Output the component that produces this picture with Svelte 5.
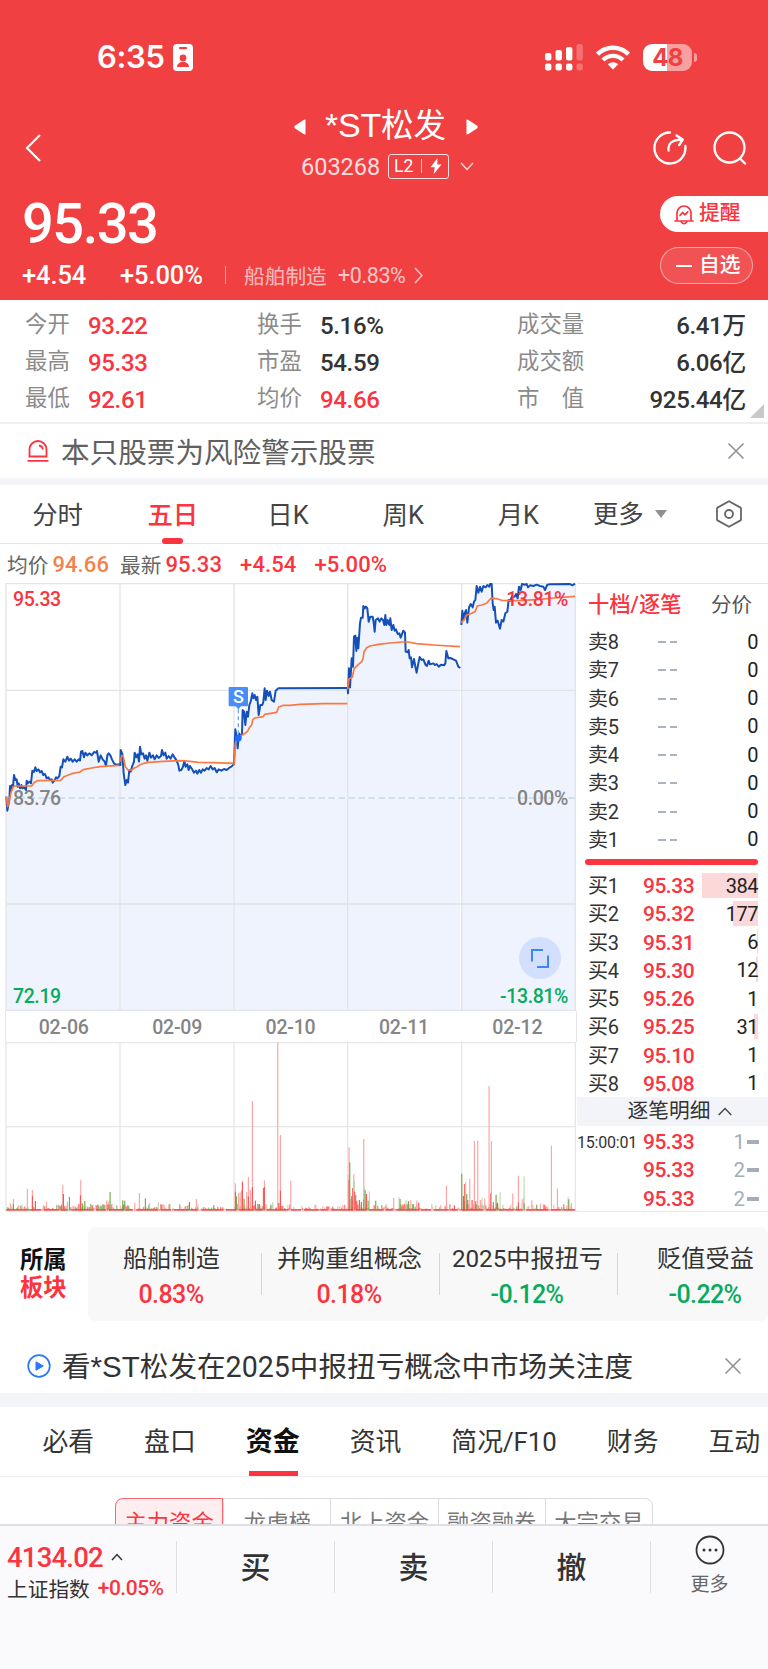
<script>
  const stats = [
    ['今开', '93.22', 'up', '换手', '5.16%', '', '成交量', '6.41万'],
    ['最高', '95.33', 'up', '市盈', '54.59', '', '成交额', '6.06亿'],
    ['最低', '92.61', 'up', '均价', '94.66', 'up', '市　值', '925.44亿']
  ];
  const periods = ['分时', '五日', '日K', '周K', '月K'];
  const dates = ['02-06', '02-09', '02-10', '02-11', '02-12'];
  const asks = [8, 7, 6, 5, 4, 3, 2, 1];
  const bids = [
    ['95.33', 384, 56], ['95.32', 177, 25], ['95.31', 6, 1], ['95.30', 12, 2],
    ['95.26', 1, 0], ['95.25', 31, 4.5], ['95.10', 1, 0], ['95.08', 1, 0]
  ];
  const ticks = [['15:00:01', 1], ['', 2], ['', 2]];
  const sectors = [
    ['船舶制造', '0.83%', 'up'], ['并购重组概念', '0.18%', 'up'],
    ['2025中报扭亏', '-0.12%', 'down'], ['贬值受益', '-0.22%', 'down']
  ];
  const sections = ['必看', '盘口', '资金', '资讯', '简况/F10', '财务', '互动'];
  const funds = ['主力资金', '龙虎榜', '北上资金', '融资融券', '大宗交易'];

  // One entry per trading day: horizontal origin, price trace, average trace.
  const days = [
    {
      dx: 0,
      price: '19,680 22,722 25,705 28,690 30,648 33,662 36,645 39,650 42,615 46,630 50,628 53,650 56,640 60,655 64,645 67,655 72,652 78,660 80,632 83,640 88,635 93,640 97,602 102,606 106,592 110,603 115,598 120,607 125,603 130,615 135,612 140,625 145,622 150,630 155,628 158,638 163,632 168,622 172,625 178,618 182,590 186,592 190,568 196,575 202,560 207,572 212,566 218,575 224,568 230,575 236,568 240,572 243,545 247,543 252,562 256,548 262,556 268,550 275,556 282,546 289,548 291,543 296,575 302,556 308,568 314,575 318,588 322,556 326,550 331,556 336,568 342,580 348,584 360,583',
      avg: '19,680 23,710 28,690 34,665 40,650 46,648 95,648 102,638 112,632 182,631 192,620 215,611 240,606 250,599 275,594 300,590 345,587 360,586'
    },
    {
      dx: 0,
      price: '361,588 362,540 367,552 371,610 376,645 380,630 384,638 388,600 392,605 396,590 402,575 404,548 409,562 413,553 417,575 420,530 424,553 429,550 434,566 438,556 442,572 448,548 453,563 459,556 464,568 470,556 476,564 483,558 486,540 491,556 496,548 500,566 506,558 512,566 518,553 524,563 530,572 535,585 538,602 544,600 549,590 553,573 557,590 562,583 566,600 570,588 576,597 582,608 588,602 592,611 598,600 603,608 608,598 614,602 620,594 626,598 632,588 638,598 644,594 650,607 656,598 664,602 672,597 680,600 688,593 694,590 701,583',
      avg: '361,575 365,556 370,560 376,590 384,600 395,600 403,594 412,590 420,584 432,580 445,577 490,574 540,572 570,574 595,577 640,578 703,580'
    },
    {
      dx: 660,
      price: '42,585 46,478 50,500 53,535 57,490 61,500 66,490 68,420 72,425 76,465 80,425 84,440 88,405 92,395 97,370 100,385 104,375 108,390 112,380 116,435 121,405 127,405 130,395 134,355 137,390 141,362 146,378 150,365 155,390 162,395 167,362 175,355 382,354',
      avg: '42,585 46,520 52,505 62,498 72,492 82,485 90,470 95,465 98,450 104,444 130,440 134,433 170,427 176,411 190,406 210,406 240,403 310,401 382,401'
    },
    {
      dx: 660,
      price: '383,352 384,370 387,295 390,352 395,265 399,290 402,200 406,197 409,243 412,203 415,235 420,160 423,143 428,143 430,108 434,115 438,110 442,115 446,155 451,140 458,140 461,158 464,185 467,150 474,145 479,155 484,145 489,150 493,165 496,135 499,165 503,150 508,165 511,145 515,180 520,165 524,182 528,178 533,192 538,190 542,203 550,182 555,188 557,245 563,247 566,240 569,265 573,262 576,292 582,267 586,290 590,308 594,285 599,261 605,270 610,268 617,285 621,288 626,272 630,283 640,280 645,285 650,282 656,290 664,284 672,286 676,280 679,243 685,265 692,264 700,268 708,272 715,290 721,294',
      avg: '383,358 387,327 397,322 402,297 412,286 425,275 429,267 432,245 440,233 450,228 475,223 510,219 545,216 565,216 590,221 640,225 720,230'
    },
    {
      dx: 660,
      price: '724,165 727,122 730,150 734,130 738,120 742,158 747,112 752,102 758,112 762,95 766,90 770,48 775,68 780,50 785,65 790,48 797,52 802,45 808,50 810,42 815,42 818,100 821,120 824,110 828,158 833,152 840,176 845,150 850,155 856,130 862,125 866,90 871,92 876,80 884,80 888,72 893,85 897,50 902,60 906,42 915,44 920,42 924,52 930,46 940,48 950,44 960,48 970,50 975,60 982,44 990,43 1050,42 1057,46 1065,41',
      avg: '724,157 732,150 740,135 755,130 765,125 772,108 785,105 800,100 808,90 813,85 830,86 845,91 880,92 910,91 960,88 1000,84 1065,79'
    }
  ];
  const area = (pts) => {
    const p = pts.split(' ');
    return `${p[0].split(',')[0]},1323 ${pts} ${p[p.length - 1].split(',')[0]},1323`;
  };

  // Volume spikes: x, top, colour key (p pale red, r red, g green, l pale green).
  const spikes = [
    [31, 520, 'p'], [40, 507, 'p'], [40, 522, 'g'], [82, 477, 'p'], [97, 480, 'p'], [97, 498, 'r'], [106, 513, 'r'], [139, 515, 'p'], [130, 526, 'p'],
    [188, 465, 'p'], [190, 492, 'r'], [184, 524, 'g'], [202, 515, 'p'], [208, 501, 'g'], [242, 450, 'p'], [241, 496, 'r'], [254, 513, 'g'], [247, 520, 'g'],
    [276, 526, 'r'], [320, 511, 'p'], [326, 514, 'p'], [330, 486, 'g'], [324, 524, 'r'],
    [368, 511, 'g'], [374, 512, 'g'], [370, 524, 'g'], [404, 518, 'p'], [418, 489, 'p'], [436, 505, 'g'], [448, 519, 'p'], [475, 516, 'l'], [490, 527, 'l'], [507, 527, 'p'], [568, 516, 'r'], [589, 507, 'p'], [594, 522, 'l'],
    [706, 460, 'p'], [706, 485, 'r'], [709, 499, 'g'], [715, 490, 'p'], [720, 487, 'p'], [724, 482, 'p'], [727, 455, 'r'], [732, 506, 'g'], [740, 486, 'p'], [745, 441, 'p'], [745, 500, 'r'], [751, 480, 'p'], [757, 213, 'p'], [757, 472, 'r'], [766, 512, 'r'], [778, 522, 'g'], [790, 474, 'r'], [793, 451, 'p'], [793, 471, 'r'],
    [818, 516, 'l'], [812, 524, 'g'], [833, 38, 'p'], [836, 519, 'r'], [841, 315, 'p'], [841, 482, 'r'], [872, 452, 'p'],
    [1044, 435, 'l'], [1047, 352, 'p'], [1047, 450, 'r'], [1049, 397, 'g'], [1055, 498, 'r'], [1058, 474, 'r'], [1061, 433, 'p'], [1063, 453, 'l'], [1064, 485, 'r'], [1067, 495, 'g'], [1070, 512, 'r'], [1078, 510, 'r'], [1084, 516, 'r'], [1091, 327, 'p'], [1091, 508, 'r'], [1093, 472, 'l'], [1095, 480, 'g'], [1099, 492, 'r'], [1108, 484, 'l'], [1104, 512, 'g'], [1127, 512, 'g'],
    [1158, 523, 'p'], [1181, 504, 'p'], [1197, 501, 'l'], [1200, 507, 'g'], [1218, 510, 'l'], [1225, 513, 'g'], [1232, 511, 'p'], [1239, 522, 'g'], [1250, 512, 'p'], [1256, 518, 'r'], [1295, 521, 'l'], [1339, 467, 'p'], [1363, 526, 'r'],
    [1385, 431, 'g'], [1388, 462, 'l'], [1390, 498, 'r'], [1394, 462, 'r'], [1397, 455, 'l'], [1400, 492, 'g'], [1403, 510, 'r'], [1409, 446, 'p'], [1416, 510, 'r'], [1423, 333, 'p'], [1427, 514, 'r'], [1433, 332, 'p'], [1441, 510, 'p'], [1446, 502, 'l'], [1454, 505, 'p'],
    [1467, 168, 'p'], [1472, 490, 'r'], [1474, 333, 'p'], [1480, 516, 'g'], [1488, 494, 'g'], [1492, 518, 'r'], [1500, 486, 'l'], [1538, 490, 'p'], [1555, 438, 'p'], [1555, 518, 'r'], [1566, 508, 'p'], [1571, 502, 'p'], [1572, 439, 'l'], [1572, 520, 'g'], [1595, 511, 'p'], [1610, 524, 'g'], [1621, 521, 'p'], [1654, 347, 'p'], [1672, 476, 'p'], [1704, 500, 'l'], [1706, 508, 'g'], [1714, 519, 'p']
  ];
  const tone = { p: '#ffa3a5', r: '#fb5555', g: '#78a951', l: '#c3dcb4' };

  let seed = 17;
  const rnd = () => (seed = (seed * 16807) % 2147483647) / 2147483647;
  const busy = [[175, 345], [360, 385], [702, 800], [1044, 1100], [1190, 1260], [1385, 1510]];
  const floor = [];
  for (let x = 19; x < 1724; x += 3) {
    const b = busy.some(([s, e]) => x >= s && x <= e);
    const r = rnd();
    const early = (x >= 1044 && x < 1068) || (x >= 1385 && x < 1402);
    const h = 3 + (b ? rnd() * 17 : Math.pow(rnd(), 4) * 16) + (early ? 30 * rnd() : 0);
    const calm = (x > 860 && x < 1040) || x > 1630;
    floor.push([x, h, r < 0.3 && !calm ? 'g' : r < 0.6 ? 'p' : 'r']);
  }
</script>

<div class="screen">
  <header>
    <div class="status">
      <span class="time">6:35</span>
      <svg class="badge" width="20" height="27" viewBox="0 0 20 27"><rect width="20" height="27" rx="4" fill="#fff"/><rect x="6" y="3" width="8" height="2.2" rx="1" fill="#f04042"/><circle cx="10" cy="14" r="3.4" fill="#f04042"/><path d="M4 23c0-3 2.5-5 6-5s6 2 6 5z" fill="#f04042"/></svg>
      <svg class="signal" width="39" height="27" viewBox="0 0 39 27" fill="#fff"><rect x="0" y="9" width="6.4" height="7.5" rx="2"/><rect x="10.5" y="6" width="6.4" height="10.5" rx="2"/><rect x="21" y="3" width="6.4" height="13.5" rx="2"/><rect x="31.5" y="0" width="6.4" height="16.5" rx="2" opacity=".25"/><rect x="0" y="19.5" width="6.4" height="7" rx="2"/><rect x="10.5" y="19.5" width="6.4" height="7" rx="2"/><rect x="21" y="19.5" width="6.4" height="7" rx="2"/><rect x="31.5" y="19.5" width="6.4" height="7" rx="2" opacity=".25"/></svg>
      <svg class="wifi" width="34" height="25" viewBox="0 0 34 25"><g fill="none" stroke="#fff" stroke-width="4.4"><path d="M1.5 9.2a22 22 0 0 1 31 0"/><path d="M7 15a14.2 14.2 0 0 1 20 0"/></g><path d="M17 24.6l-5.2-5.3a7.5 7.5 0 0 1 10.4 0z" fill="#fff"/></svg>
      <div class="battery"><span>48</span></div><i class="nub"></i>
    </div>
    <div class="nav">
      <svg class="back" width="17" height="30" viewBox="0 0 17 30"><path d="M15 2L2 15l13 13" fill="none" stroke="#fff" stroke-width="2.2"/></svg>
      <div class="titles">
        <div class="title">
          <svg width="12" height="16" viewBox="0 0 12 16"><path d="M11.5 .5v15L9.5 15 .8 9.2q-1-1.200 0-2.400L9.500 1z" fill="#fff"/></svg>
          <span><b>*ST</b>松发</span>
          <svg width="12" height="16" viewBox="0 0 12 16"><path d="M.5 .5v15L2.500 15 11.200 9.200q1-1.200 0-2.400L2.500 1z" fill="#fff"/></svg>
        </div>
        <div class="code">
          <span>603268</span>
          <div class="level"><em>L2</em><i></i><svg width="12" height="16" viewBox="0 0 12 16"><path d="M7.500 0L.5 9.200h4.200L3.800 16 11.500 6.500H7.300z" fill="#fff"/></svg></div>
          <svg width="14" height="9" viewBox="0 0 14 9"><path d="M1 1l6 6.500L13 1" fill="none" stroke="#fff" stroke-opacity=".8" stroke-width="1.500"/></svg>
        </div>
      </div>
      <svg class="share" width="34" height="34" viewBox="0 0 34 34" fill="none" stroke="#fff" stroke-width="2.300" stroke-linecap="round" stroke-linejoin="round"><path d="M17 1.500A15.500 15.500 0 1 0 32.300 15"/><path d="M15.500 19.500C15 12.500 18.500 8.800 29.500 8.500M23.500 4.500l6.300 4-3.600 5.500"/></svg>
      <svg class="search" width="34" height="34" viewBox="0 0 34 34" fill="none" stroke="#fff" stroke-width="2.300" stroke-linecap="round"><circle cx="16.500" cy="16.500" r="15"/><path d="M27 27.500l5 5"/></svg>
    </div>
    <div class="quote">
      <div class="figures">
        <div class="last">95.33</div>
        <div class="change"><b class="c1">+4.54</b><b class="c2">+5.00%</b><i></i><span class="industry">船舶制造</span><span class="ipct">+0.83%</span><svg width="9" height="17" viewBox="0 0 9 17"><path d="M1 1l7 7.500L1 16" fill="none" stroke="#fff" stroke-opacity=".65" stroke-width="1.600"/></svg></div>
      </div>
      <div class="pills">
        <div class="pill alert"><svg width="20" height="21" viewBox="0 0 20 21" fill="none" stroke="#fb3440" stroke-width="1.700" stroke-linecap="round" stroke-linejoin="round"><path d="M1 17h18M3 16.500V9a7 7 0 0 1 14 0v7.500M7 17.500q3 4.500 6 0M6 11.500l2.500-3 2.500 2.300 2.800-3"/></svg><span>提醒</span></div>
        <div class="pill fav"><i></i><span>自选</span></div>
      </div>
    </div>
  </header>

  <section class="stats">
    {#each stats as s}
      <div class="srow">
        <span class="k k1">{s[0]}</span><span class="v v1 {s[2]}">{s[1]}</span>
        <span class="k k2">{s[3]}</span><span class="v v2 {s[5]}">{s[4]}</span>
        <span class="k k3">{s[6]}</span><span class="v v3">{s[7]}</span>
      </div>
    {/each}
    <i class="corner"></i>
  </section>

  <div class="notice">
    <svg width="22" height="22" viewBox="0 0 22 22" fill="none" stroke="#fb3440" stroke-width="1.800"><path d="M2.500 16.500V9.500a8.500 8.500 0 0 1 17 0v7zM0.500 20.800h21"/><path d="M12 5.500q3.500.5 4 4"/></svg>
    <span>本只股票为风险警示股票</span>
    <svg class="x" width="16" height="16" viewBox="0 0 16 16"><path d="M.5.5l15 15M15.500.5l-15 15" stroke="#8e8e8e" stroke-width="1.500"/></svg>
  </div>
  <div class="band thin"></div>

  <nav class="periods">
    {#each periods as p, i}<span class:on={i === 1}>{p}</span>{/each}
    <div class="more">更多<i></i></div>
    <svg width="28" height="28" viewBox="0 0 28 28" fill="none" stroke="#666" stroke-width="1.800"><path d="M14 1.200l11.500 6.400q.5.300.5.800v11.200q0 .5-.5.800L14 26.800 2.500 20.400q-.5-.3-.5-.8V8.400q0-.5.5-.8z"/><circle cx="14" cy="14" r="4"/></svg>
  </nav>

  <div class="info"><span>均价</span><b class="or">94.66</b><span class="i2">最新</span><b>95.33</b><b class="i3">+4.54</b><b class="i4">+5.00%</b></div>

  <main>
    <div class="charts">
      <div class="price">
        <svg width="572" height="428" viewBox="15 39 1716 1284">
          <g fill="#eff3fe">{#each days as d}<polygon transform="translate({d.dx},0)" points={area(d.price)}/>{/each}</g>
          <g stroke="#e3e4e6" stroke-width="4" fill="none"><path d="M18 41V1323M360 41V1323M702 41V1323M1043 41V1323M1385 41V1323M1726 41V1323M16 41H1728M16 361H1728M16 1002H1728M16 1321H1728"/></g>
          <path d="M55 684H1726" stroke="#cbdae6" stroke-width="4" stroke-dasharray="20 10"/>
          {#each days as d}
            <g transform="translate({d.dx},0)" fill="none" stroke-linejoin="round">
              <polyline points={d.price} stroke="#1450b8" stroke-width="6"/>
              <polyline points={d.avg} stroke="#fb7840" stroke-width="5"/>
            </g>
          {/each}
          <path d="M715 418V495" stroke="#6ba3fb" stroke-width="4" stroke-dasharray="12 9"/>
          <circle cx="715" cy="505" r="10" fill="#1e6dfa"/>
          <path d="M689 351h52q3 0 3 3v52q0 3-3 3h-18l-8 9-8-9h-18q-3 0-3-3v-52q0-3 3-3z" fill="#4b8df8"/>
        </svg>
        <span class="mark">S</span>
        <span class="lb tl up">95.33</span><span class="lb tr up">13.81%</span>
        <span class="lb ml">83.76</span><span class="lb mr">0.00%</span>
        <span class="lb bl down">72.19</span><span class="lb br down">-13.81%</span>
        <div class="expand"><svg width="18" height="19" viewBox="0 0 18 19" fill="none" stroke="#3c86f8" stroke-width="2"><path d="M1 12.500V1h11M17 6.500V18H6"/></svg></div>
      </div>
      <div class="dates">{#each dates as d}<span>{d}</span>{/each}</div>
      <svg class="vol" width="572" height="170" viewBox="15 36 1716 510">
        <path d="M18 38V543M360 38V543M702 38V543M1043 38V543M1385 38V543M1726 38V543M16 38H1728M16 290H1728M16 543H1731" stroke="#e6e6e8" stroke-width="4" fill="none"/>
        {#each floor as f}<rect x={f[0]} y={541 - f[1]} width="3" height={f[1]} fill={tone[f[2]]}/>{/each}
        {#each spikes as s}<rect x={s[0] - 1.5} y={s[1]} width="3.500" height={541 - s[1]} fill={tone[s[2]]}/>{/each}
        <path d="M19 539.500H1724" stroke="#f03b3b" stroke-width="4" stroke-dasharray="66 8 30 9 44 6 21 11"/>
        <path d="M85 539.500H1724" stroke="#76a452" stroke-width="4" stroke-dasharray="8 96 10 73"/>
      </svg>
    </div>

    <aside>
      <div class="modes"><b>十档/逐笔</b><span>分价</span></div>
      {#each asks as n}<div class="lvl"><span class="n">卖{n}</span><span class="nil"><i></i><i></i></span><span class="q">0</span></div>{/each}
      <div class="split"></div>
      {#each bids as b, i}<div class="lvl"><span class="n">买{i + 1}</span><span class="p">{b[0]}</span><span class="q"><i style="width:{b[2]}px"></i><em>{b[1]}</em></span></div>{/each}
      <div class="detail">逐笔明细<svg width="14" height="9" viewBox="0 0 14 9"><path d="M.7 8L7 1.500 13.300 8" fill="none" stroke="#444" stroke-width="1.400"/></svg></div>
      {#each ticks as t}<div class="tick"><span class="t">{t[0]}</span><span class="p">{t[1] ? '95.33' : ''}</span><span class="c">{t[1]}</span><i></i></div>{/each}
    </aside>
  </main>

  <section class="sector">
    <div class="label"><b>所属</b><b class="up">板块</b></div>
    <div class="card">
      {#each sectors as s}<div class="sec"><span>{s[0]}</span><b class={s[2]}>{s[1]}</b></div>{/each}
    </div>
  </section>

  <div class="notice video">
    <svg width="24" height="24" viewBox="0 0 24 24"><circle cx="12" cy="12" r="10.800" fill="none" stroke="#2878f8" stroke-width="1.700"/><path d="M9 7.800v8.400l7.300-4.200z" fill="#2878f8" stroke="#2878f8" stroke-linejoin="round"/></svg>
    <span>看<b>*ST</b>松发在2025中报扭亏概念中市场关注度</span>
    <svg class="x" width="16" height="16" viewBox="0 0 16 16"><path d="M.5.5l15 15M15.500.5l-15 15" stroke="#8e8e8e" stroke-width="1.500"/></svg>
  </div>
  <div class="band"></div>

  <nav class="sections">{#each sections as s, i}<span class:on={i === 2}>{s}</span>{/each}</nav>
  <div class="funds"><div class="seg">{#each funds as f, i}<span class:on={i === 0}>{f}</span>{/each}</div></div>

  <footer>
    <div class="index">
      <div class="i-top"><b>4134.02</b><svg width="12" height="8" viewBox="0 0 12 8"><path d="M1 7l5-5.500L11 7" fill="none" stroke="#333" stroke-width="1.500"/></svg></div>
      <div class="i-bot"><span>上证指数</span><b>+0.05%</b></div>
    </div>
    <div class="act">买</div><div class="act">卖</div><div class="act">撤</div>
    <div class="fmore">
      <svg width="30" height="30" viewBox="0 0 30 30"><circle cx="15" cy="15" r="13.500" fill="none" stroke="#333" stroke-width="1.800"/><g fill="#333"><circle cx="9" cy="15" r="1.500"/><circle cx="15" cy="15" r="1.500"/><circle cx="21" cy="15" r="1.500"/></g></svg>
      <span>更多</span>
    </div>
  </footer>
</div>

<style>
  :global(body) { margin: 0; background: #fff; }
  .screen { width: 768px; height: 1669px; overflow: hidden; display: flex; flex-direction: column; background: #fff; color: #333; font-family: Roboto, "Noto Sans CJK SC", sans-serif; box-sizing: border-box; }
  .screen * { box-sizing: border-box; }
  .screen > * { flex: none; }
  svg { display: block; flex: none; }
  b, em { font-weight: 500; font-style: normal; }
  span, b { white-space: nowrap; }
  .up { color: #fb3440; }
  .down { color: #08ab5c; }

  header { height: 300px; background: #f04042; color: #fff; display: flex; flex-direction: column; }
  .status { height: 104px; padding: 10px 71px 0 97px; display: flex; align-items: center; }
  .time { font: 600 31px/36px Inter, sans-serif; letter-spacing: -.3px; width: 76px; }
  .signal { margin-left: auto; }
  .wifi { margin-left: 12px; margin-right: 13px; }
  .battery { width: 49px; height: 27px; border-radius: 9px; background: linear-gradient(90deg, #fff 49%, #f8a0a0 49%); display: flex; align-items: center; justify-content: center; color: #f04042; font: 700 24px/27px Inter, sans-serif; letter-spacing: -.8px; }
  .nub { width: 3px; height: 9px; margin-left: 2px; border-radius: 0 3px 3px 0; background: #f8a0a0; }
  .nav { height: 88px; display: flex; padding: 0 21px 0 25px; align-items: center; }
  .titles { width: 202px; margin-left: 242px; height: 88px; }
  .title { height: 45px; display: flex; align-items: center; justify-content: center; gap: 17px; font-size: 32.500px; line-height: 45px; padding-left: 1px; }
  .title span { width: 126px; text-align: center; position: relative; top: -1px; }
  .title b { font: 400 34px/45px "Liberation Sans", sans-serif; letter-spacing: -.3px; }
  .code { display: flex; align-items: center; height: 34px; padding-left: 17px; }
  .code > span { font-size: 23.500px; opacity: .82; letter-spacing: 0; width: 87px; line-height: 34px; padding-top: 2px; }
  .level { width: 61px; height: 25px; border: 1.500px solid rgba(255,255,255,.85); border-radius: 3px; display: flex; align-items: center; padding: 0 6px 0 5px; justify-content: space-between; margin-right: 11px; font-size: 17.500px; }
  .level em { font-weight: 400; }
  .level i { width: 1px; height: 14px; background: rgba(255,255,255,.7); }
  .share { margin-left: 167px; }
  .search { margin-left: 26px; }
  .quote { height: 108px; display: flex; justify-content: space-between; }
  .figures { padding-left: 22px; }
  .last { font-size: 56px; font-weight: 500; line-height: 64px; height: 66px; letter-spacing: -1.500px; }
  .change { display: flex; align-items: center; height: 34px; }
  .change b { font-size: 25.500px; letter-spacing: -.1px; }
  .c1 { width: 98px; }
  .c2 { width: 105px; }
  .change i { width: 1px; height: 18px; background: rgba(255,255,255,.5); margin-right: 18px; }
  .industry { width: 94px; font-size: 20.700px; opacity: .65; }
  .ipct { width: 76px; font-size: 21.500px; opacity: .7; letter-spacing: -.4px; }
  .pills { width: 108px; padding-top: 4px; }
  .pill { height: 36px; display: flex; align-items: center; font-size: 20.700px; line-height: 34px; }
  .pill span { position: relative; top: -1px; }
  .alert { background: #fff; color: #fb3440; border-radius: 18px 0 0 18px; padding-left: 14px; gap: 5px; font-weight: 500; }
  .fav { width: 93px; height: 37px; margin-top: 15px; border: 1px solid rgba(255,255,255,.5); border-radius: 19px; background: rgba(255,255,255,.1); padding-left: 15px; gap: 7px; font-weight: 500; }
  .fav i { width: 16px; height: 2px; background: #fff; }

  .stats { position: relative; height: 124px; padding: 7px 22px 0 25px; border-bottom: 2px solid #efeff0; }
  .srow { height: 36.700px; display: flex; align-items: center; }
  .k { font-size: 22.400px; color: #8b8b8b; line-height: 36px; position: relative; top: -1px; }
  .v { font-size: 24px; font-weight: 500; line-height: 36px; letter-spacing: -.35px; padding-top: 2px; }
  .k1, .k2 { width: 63px; }
  .v1 { width: 169px; }
  .v2 { width: 197px; }
  .v3 { margin-left: auto; }
  .corner { position: absolute; right: 4px; bottom: 4px; border: solid transparent; border-width: 14px 0 0 14px; border-bottom: 14px solid #c9c9cb; border-top: 0; }
  .notice { height: 54px; padding: 0 24px 0 27px; display: flex; align-items: center; }
  .notice > span { font-size: 28.600px; margin-left: 12px; color: #606060; line-height: 54px; position: relative; top: 2px; }
  .notice .x { margin-left: auto; }
  .band { height: 14px; background: #f3f4f9; }
  .band.thin { height: 7px; }

  .periods { height: 59px; border-bottom: 1.500px solid #e4e4e6; display: flex; align-items: center; font-size: 25.400px; color: #444; padding-right: 25px; }
  .periods > span { width: 115.200px; height: 57px; text-align: center; line-height: 59px; position: relative; }
  .periods .on { color: #fb3440; font-weight: 500; }
  .periods .on::after { content: ""; position: absolute; left: 47px; bottom: -1px; width: 21px; height: 6px; border-radius: 3px; background: #fb3440; }
  .more { display: flex; align-items: center; padding-left: 17px; gap: 11px; margin-right: auto; line-height: 57px; }
  .more i { border: 6.500px solid transparent; border-top: 8px solid #909094; border-bottom: 0; }

  .info { height: 39px; padding: 1px 0 0 7px; display: flex; align-items: center; font-size: 20.700px; color: #666; }
  .info b { color: #fb3440; font-size: 22px; letter-spacing: .1px; margin-left: 4px; line-height: 36px; padding-top: 1px; }
  .info .or { color: #f2824a; }
  .info .i2 { margin-left: 11px; }
  .info .i3 { margin-left: 18px; }
  .info .i4 { margin-left: 18px; }

  main { height: 629px; display: flex; padding-left: 5px; }
  .charts { width: 572px; }
  .price { position: relative; width: 572px; height: 428px; }
  .lb { position: absolute; font-size: 19.500px; font-weight: 500; line-height: 24px; letter-spacing: -.4px; }
  .tl, .ml, .bl { left: 8px; }
  .tr, .mr, .br { right: 9px; }
  .tl, .tr { top: 5px; }
  .ml, .mr { top: 204px; color: #858585; }
  .bl, .br { bottom: 2px; }
  .mark { position: absolute; left: 224px; top: 103px; width: 19px; text-align: center; font: 500 18px/22px Roboto, sans-serif; color: #fff; }
  .expand { position: absolute; left: 514px; top: 354px; width: 42px; height: 42px; border-radius: 50%; background: #d2e0fe; display: flex; align-items: center; justify-content: center; }
  .dates { height: 31px; display: flex; padding: 0 2px 0 1px; border: solid #e6e6e8; border-width: 0 1px; color: #858585; font-size: 19.500px; font-weight: 500; letter-spacing: -.2px; }
  .dates span { flex: 1; text-align: center; line-height: 33px; }

  aside { width: 191px; height: 629px; border-top: 1px solid #e3e4e6; border-bottom: 1px solid #e8e8ea; display: flex; flex-direction: column; }
  .modes { height: 43px; display: flex; justify-content: space-between; padding: 0 16px 0 11px; align-items: center; line-height: 40px; font-size: 20.500px; color: #555; flex: none; }
  .modes span, .modes b { position: relative; top: -1px; }
  .modes b { color: #fb3440; font-size: 21.300px; }
  .lvl { height: 28.250px; display: flex; align-items: center; padding: 2px 10px 0 11px; flex: none; }
  .n { width: 55px; font-size: 20px; line-height: 26px; letter-spacing: -.2px; }
  .nil { width: 50px; display: flex; gap: 4px; padding-left: 15px; }
  .nil i { width: 7.500px; height: 2px; background: #a9b4be; }
  .p { width: 52px; color: #fb3440; font-size: 21px; font-weight: 500; letter-spacing: -.5px; }
  .q { margin-left: auto; position: relative; font-size: 20px; font-weight: 400; line-height: 25px; letter-spacing: -.5px; color: #222; }
  .q i { position: absolute; right: 0; top: -1px; height: 25px; background: #fdd8da; }
  .q em { position: relative; font-weight: 400; }
  .split { height: 6px; width: 173px; margin: 6px 0 6px 8px; border-radius: 3px; background: #fb3440; flex: none; }
  .detail { height: 29px; background: #f3f4f9; display: flex; align-items: center; justify-content: center; gap: 8px; padding-left: 15px; font-size: 20.700px; line-height: 29px; flex: none; }
  .tick { height: 28.300px; display: flex; align-items: center; padding: 4px 9px 0 0; flex: none; }
  .t { width: 66px; font-size: 16px; letter-spacing: -.2px; }
  .c { margin-left: auto; color: #a5aeb8; font-size: 20.500px; margin-right: 2px; }
  .tick i { width: 12px; height: 4px; background: #a5aeb8; }

  .sector { height: 127px; padding-top: 15px; display: flex; }
  .label { width: 88px; height: 94px; padding: 20px 0 0 20px; font-size: 23.300px; color: #111; line-height: 27.500px; }
  .label b { display: block; font-weight: 700; }
  .label .up { color: #fb3440; }
  .card { height: 94px; width: 680px; background: #f8f8f8; border-radius: 8px; display: flex; overflow: hidden; }
  .sec { width: 178px; flex: none; text-align: center; position: relative; padding-top: 13px; }
  .sec:first-child { margin-left: -5.500px; }
  .sec span, .sec b { display: block; }
  .sec span { font-size: 24.200px; line-height: 38px; }
  .sec b { font-size: 25px; line-height: 32px; letter-spacing: -.6px; padding-top: 1px; margin-left: -1px; }
  .sec + .sec::before { content: ""; position: absolute; left: 0; top: 26px; width: 1px; height: 42px; background: #d5d5d8; }
  .video { height: 54px; padding-right: 27px; }
  .video > span { color: #333; margin-left: 11px; top: 1px; }
  .video b { font: 400 29.500px "Liberation Sans", sans-serif; }

  .sections { height: 70px; display: flex; align-items: center; border-bottom: 1.500px solid #eeeef0; padding-left: 42.500px; font-size: 25.800px; }
  .sections span { margin-right: 50px; line-height: 69px; height: 69px; position: relative; padding-top: 1px; }
  .sections .on { font-weight: 700; color: #111; font-size: 27px; }
  .sections .on::after { content: ""; position: absolute; left: 3px; bottom: 0; width: 49px; height: 5px; background: #fb3440; }
  .funds { height: 47px; overflow: hidden; padding: 21px 115px 0; }
  .seg { height: 60px; width: 538px; border: 1.500px solid #dcdcde; border-radius: 8px; display: flex; overflow: visible; color: #777; font-size: 22.300px; }
  .seg span { flex: 1; text-align: center; line-height: 49px; border-left: 1px solid #dcdcde; }
  .seg .on { color: #fb3440; background: #ffeeef; border: 1.500px solid #fb6870; border-radius: 8px 0 0 8px; margin: -1px 0 0 -1px; }

  footer { height: 145px; background: #fafafd; border-top: 2px solid #dfdfe3; display: flex; padding-top: 15px; }
  .index { width: 176px; padding-left: 7px; height: 52px; }
  .i-top { display: flex; align-items: center; gap: 8px; height: 32px; }
  .i-top b { font-size: 27.500px; color: #fb3440; letter-spacing: -.8px; }
  .i-bot { display: flex; align-items: center; height: 30px; gap: 8px; font-size: 20.700px; }
  .i-bot b { font-size: 21px; color: #fb3440; letter-spacing: -.5px; }
  .act { width: 158px; height: 52px; border-left: 1.500px solid #dfdfe3; text-align: center; font-size: 30px; line-height: 53px; font-weight: 500; }
  .fmore { flex: 1; height: 52px; border-left: 1.500px solid #dfdfe3; display: flex; flex-direction: column; align-items: center; color: #666; font-size: 19px; }
  .fmore svg { margin-top: -6px; }
  .fmore span { line-height: 32px; margin-top: 4px; }
</style>
